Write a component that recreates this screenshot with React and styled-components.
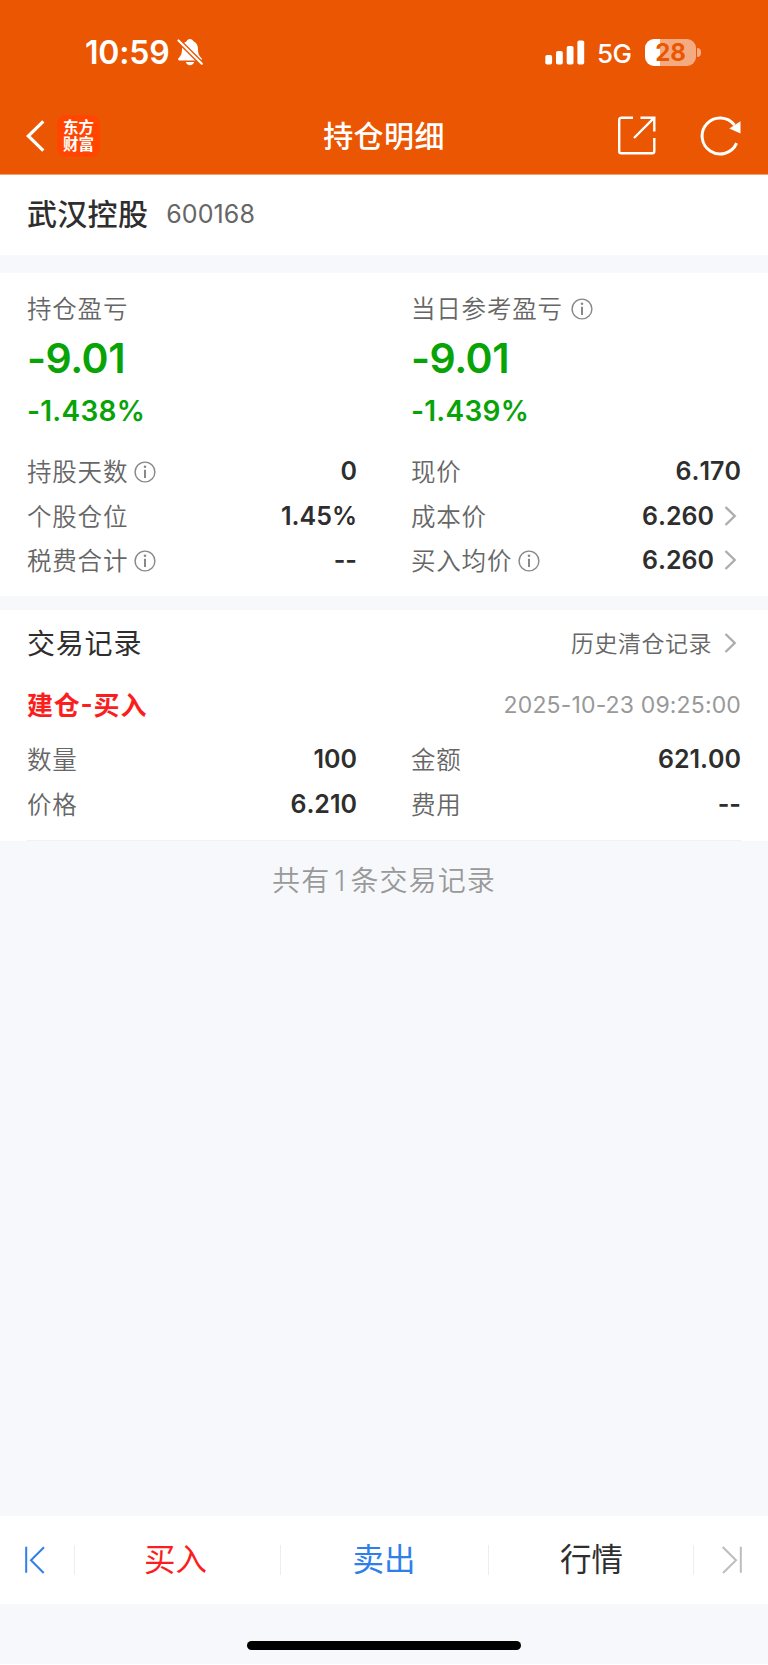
// App.jsx

import styled, { createGlobalStyle, ThemeProvider } from 'styled-components';

const theme = {
  colors: {
    brand: '#eb5602',
    page: '#f7f8fb',
    text: '#2e2e2e',
    label: '#666666',
    muted: '#999999',
    loss: '#07a307',
    buy: '#fb1e1e',
    sell: '#2f7fea',
  },
  fonts: {
    number: '"Inter", "Noto Sans CJK SC", sans-serif',
    chinese: '"Noto Sans CJK SC", "Inter", sans-serif',
  },
};

const GlobalStyle = createGlobalStyle`
  * {
    box-sizing: border-box;
  }

  body {
    margin: 0;
    background-color: #ffffff;
  }

  svg {
    display: block;
    flex: none;
  }
`;

const Screen = styled.div`
  display: flex;
  flex-direction: column;
  width: 768px;
  height: 1664px;
  overflow: hidden;
  background-color: ${({ theme }) => theme.colors.page};
  font-family: ${({ theme }) => theme.fonts.chinese};
  color: ${({ theme }) => theme.colors.text};
  white-space: nowrap;
`;

/* Header */

const Header = styled.header`
  height: 175px;
  background-color: ${({ theme }) => theme.colors.brand};
  border-bottom: 1px solid #f3a173;
  color: #ffffff;
`;

const StatusBar = styled.div`
  display: flex;
  align-items: center;
  height: 98px;
  padding: 6px 67px 0 85px;
`;

const Clock = styled.span`
  font-family: ${({ theme }) => theme.fonts.number};
  font-weight: 600;
  font-size: 32px;
  line-height: 40px;
  letter-spacing: -0.2px;
  width: 92px;
  padding-top: 2px;
`;

const StatusIcons = styled.div`
  display: flex;
  align-items: center;
  margin-left: auto;
`;

const Network = styled.span`
  font-family: ${({ theme }) => theme.fonts.number};
  font-weight: 500;
  font-size: 26px;
  line-height: 30px;
  letter-spacing: -0.6px;
  width: 48px;
  margin: 3px 0 0 12px;
`;

const Battery = styled.div`
  display: flex;
  align-items: center;
  justify-content: center;
  width: 51px;
  height: 27px;
  border-radius: 9px;
  background: linear-gradient(90deg, #ffffff 15px, #f5ab81 15px);
  font-family: ${({ theme }) => theme.fonts.number};
  font-weight: 700;
  font-size: 24px;
  line-height: 27px;
  color: ${({ theme }) => theme.colors.brand};
`;

const BatteryCap = styled.div`
  width: 4px;
  height: 9px;
  margin-left: 1px;
  border-radius: 0 4px 4px 0;
  background-color: #f5ab81;
`;

const NavBar = styled.nav`
  display: grid;
  grid-template-columns: 1fr auto 1fr;
  align-items: center;
  height: 75px;
  padding: 0 26px;
`;

const NavSide = styled.div`
  display: flex;
  align-items: center;
  justify-content: ${({ $end }) => ($end ? 'flex-end' : 'flex-start')};
  gap: ${({ $end }) => ($end ? '44px' : '12px')};
`;

const Logo = styled.div`
  width: 43px;
  height: 42px;
  padding-top: 3px;
  border-radius: 9px;
  background-color: #ff4500;
  font-weight: 700;
  font-size: 15.5px;
  line-height: 17px;
  text-align: center;
`;

const NavTitle = styled.h1`
  margin: 0;
  padding-bottom: 4px;
  font-weight: 500;
  font-size: 30px;
  line-height: 40px;
  letter-spacing: 0.4px;
`;

/* Content */

const StockRow = styled.section`
  display: flex;
  align-items: center;
  gap: 18px;
  height: 80px;
  padding: 0 27px 6px;
  background-color: #ffffff;
`;

const StockName = styled.h2`
  margin: 0;
  font-weight: 500;
  font-size: 30px;
  line-height: 40px;
  letter-spacing: 0.3px;
`;

const StockCode = styled.span`
  padding-top: 4px;
  font-family: ${({ theme }) => theme.fonts.number};
  font-size: 25px;
  line-height: 40px;
  letter-spacing: 0.1px;
  color: ${({ theme }) => theme.colors.label};
`;

const Card = styled.section`
  height: ${({ $height }) => $height}px;
  margin-top: ${({ $gap }) => $gap}px;
  background-color: #ffffff;
`;

const Columns = styled.div`
  display: grid;
  grid-template-columns: 384px 384px;
`;

const ProfitBlock = styled.div`
  padding: 17px 27px 0;
`;

const Label = styled.span`
  display: flex;
  align-items: center;
  gap: ${({ $gap }) => $gap || 6}px;
  font-size: 24.5px;
  line-height: 36px;
  letter-spacing: 0.8px;
  font-weight: 350;
  color: ${({ theme }) => theme.colors.label};

  svg {
    margin-top: 1px;
  }
`;

const Amount = styled.div`
  font-family: ${({ theme }) => theme.fonts.number};
  font-weight: 600;
  font-size: 41px;
  line-height: 50px;
  letter-spacing: -0.5px;
  margin-top: 7px;
  color: ${({ theme }) => theme.colors.loss};
`;

const Percent = styled.div`
  font-family: ${({ theme }) => theme.fonts.number};
  font-weight: 600;
  font-size: 28px;
  line-height: 36px;
  letter-spacing: 0.25px;
  margin-top: 10px;
  color: ${({ theme }) => theme.colors.loss};
`;

const Rows = styled.div`
  padding-top: ${({ $top }) => $top}px;
`;

const Row = styled.div`
  display: flex;
  align-items: center;
  justify-content: space-between;
  height: 44.6px;
  padding: 0 27px;
`;

const Value = styled.span`
  display: flex;
  align-items: center;
  gap: 10px;
  font-family: ${({ theme }) => theme.fonts.number};
  font-weight: 600;
  font-size: 25px;
  line-height: 36px;
  font-kerning: none;
`;

const SectionHeader = styled.div`
  display: flex;
  align-items: center;
  justify-content: space-between;
  height: 63px;
  padding: 0 27px;
`;

const SectionTitle = styled.h3`
  margin: 0;
  font-weight: 400;
  font-size: 28px;
  line-height: 40px;
  letter-spacing: 0.8px;
`;

const HistoryLink = styled.span`
  display: flex;
  align-items: center;
  gap: 12px;
  font-weight: 350;
  font-size: 23px;
  line-height: 36px;
  letter-spacing: 0.5px;
  color: ${({ theme }) => theme.colors.label};

  svg {
    margin-top: 2px;
  }
`;

const RecordHeader = styled.div`
  display: flex;
  align-items: center;
  justify-content: space-between;
  height: 61px;
  padding: 0 27px;
`;

const RecordType = styled.span`
  display: flex;
  font-weight: 700;
  font-size: 26px;
  line-height: 36px;
  letter-spacing: 0.8px;
  color: ${({ theme }) => theme.colors.buy};
`;

const Dash = styled.span`
  font-family: ${({ theme }) => theme.fonts.number};
`;

const RecordTime = styled.time`
  padding-top: 2px;
  font-family: ${({ theme }) => theme.fonts.number};
  font-size: 23px;
  line-height: 36px;
  letter-spacing: 0.15px;
  color: ${({ theme }) => theme.colors.muted};
`;

const Divider = styled.div`
  height: 1px;
  margin: 13.8px 27px 0;
  background-color: #f0f1f3;
`;

const RecordCount = styled.p`
  margin: 20px 0 0;
  font-family: ${({ theme }) => theme.fonts.number};
  font-weight: 350;
  font-size: 28px;
  line-height: 40px;
  letter-spacing: 1.1px;
  text-align: center;
  color: ${({ theme }) => theme.colors.muted};
`;

const Count = styled.span`
  margin: 0 4px;
`;

/* Bottom bar */

const TabBar = styled.nav`
  display: grid;
  grid-template-columns: 74px 206px 208px 205px 75px;
  align-items: center;
  height: 88px;
  margin-top: auto;
  background-color: #ffffff;
`;

const Tab = styled.div`
  display: flex;
  align-items: center;
  justify-content: center;
  height: 30px;
  padding-left: ${({ $left }) => $left || 0}px;
  padding-right: ${({ $right }) => $right || 0}px;
  border-left: ${({ $first }) => ($first ? 'none' : '1px solid #ededee')};
  font-size: 31.5px;
  line-height: 30px;
  color: ${({ $color, theme }) => theme.colors[$color || 'text']};
`;

const TabText = styled.span`
  padding-bottom: 6px;
`;

const HomeArea = styled.div`
  display: flex;
  justify-content: center;
  height: 60px;
  padding-top: 37px;
`;

const HomeIndicator = styled.div`
  width: 274px;
  height: 9px;
  border-radius: 5px;
  background-color: #000000;
`;

/* Icons */

const MutedBell = () => (
  <svg width="26" height="28" viewBox="0 0 26 28">
    <path
      d="M13 1c-1.800 0-3 1-3.400 2.300C6.500 4.600 5 7.500 5 11c0 5-1.300 7-3.400 9-.9.900-.6 2.500 1 2.500h20.800c1.600 0 1.900-1.600 1-2.500-2.100-2-3.400-4-3.400-9 0-3.500-1.500-6.400-4.600-7.700C16 2 14.800 1 13 1zM8.800 24h8.400c-.5 2-2.200 3.200-4.200 3.200S9.300 26 8.800 24z"
      fill="#fff"
    />
    <path d="M1.500 2.500l24.500 24.500" stroke="#eb5602" strokeWidth="4.800" />
    <path d="M1.500 2.500l23.300 23.300" stroke="#fff" strokeWidth="2.200" strokeLinecap="round" />
  </svg>
);

const Signal = () => (
  <svg width="40" height="25" viewBox="0 0 40 25" fill="#fff">
    <rect x="0.300" y="15" width="6.800" height="9.500" rx="1.800" />
    <rect x="11" y="11" width="6.800" height="13.500" rx="1.800" />
    <rect x="21.700" y="6" width="6.800" height="18.500" rx="1.800" />
    <rect x="32.400" y="0.500" width="6.800" height="24" rx="1.800" />
  </svg>
);

const BackIcon = () => (
  <svg width="19" height="32" viewBox="0 0 19 32" fill="none" stroke="#fff" strokeWidth="3.200">
    <path d="M17.300 1.300L2.300 16l15 14.700" />
  </svg>
);

const ShareIcon = () => (
  <svg width="38" height="39" viewBox="0 0 38 39" fill="none" stroke="#fff" strokeWidth="2.400">
    <path d="M15 1.700H3.200a2 2 0 0 0-2 2V35.200a2 2 0 0 0 2 2H34.300a2 2 0 0 0 2-2V22" />
    <path d="M22.500 1.700H36.300V15.500M36.300 1.700L16 22" />
  </svg>
);

const RefreshIcon = () => (
  <svg width="42" height="40" viewBox="0 0 42 40">
    <path d="M36.600 27.200A18 18 0 1 1 34.400 9" fill="none" stroke="#fff" strokeWidth="3" />
    <path d="M40.500 5.200V17.500L29.300 12.500z" fill="#fff" />
  </svg>
);

const InfoIcon = () => (
  <svg width="22" height="22" viewBox="0 0 22 22" fill="none" stroke="#888">
    <circle cx="11" cy="11" r="9.900" strokeWidth="1.400" />
    <path d="M11 8.800v8.200" strokeWidth="2" />
    <circle cx="11" cy="5.700" r="1.300" fill="#888" stroke="none" />
  </svg>
);

const ChevronIcon = () => (
  <svg width="17" height="20" viewBox="0 0 17 20" fill="none" stroke="#adadad" strokeWidth="2.400">
    <path d="M1.500 1L10.700 10l-9.200 9" />
  </svg>
);

const FirstIcon = () => (
  <svg width="20" height="28" viewBox="0 0 20 28" fill="none" stroke="#2f7fea" strokeWidth="2">
    <path d="M1.200 .7v26M19 1.300L6 14.300l12.700 12.700" />
  </svg>
);

const LastIcon = () => (
  <svg width="20" height="28" viewBox="0 0 20 28" fill="none" stroke="#bdbdbd" strokeWidth="2">
    <path d="M18.800 .7v26M.7 1L14 14.300l-13 12.700" />
  </svg>
);

/* Data */

const profits = [
  { label: '持仓盈亏', amount: '-9.01', percent: '-1.438%' },
  { label: '当日参考盈亏', amount: '-9.01', percent: '-1.439%', info: true },
];

const holding = [
  { label: '持股天数', value: '0', info: true },
  { label: '现价', value: '6.170' },
  { label: '个股仓位', value: '1.45%' },
  { label: '成本价', value: '6.260', link: true },
  { label: '税费合计', value: '--', info: true },
  { label: '买入均价', value: '6.260', info: true, link: true },
];

const record = [
  { label: '数量', value: '100' },
  { label: '金额', value: '621.00' },
  { label: '价格', value: '6.210' },
  { label: '费用', value: '--' },
];

const DataRows = ({ items, top }) => (
  <Rows $top={top}>
    <Columns>
      {items.map(({ label, value, info, link }) => (
        <Row key={label}>
          <Label>
            {label}
            {info && <InfoIcon />}
          </Label>
          <Value>
            {value}
            {link && <ChevronIcon />}
          </Value>
        </Row>
      ))}
    </Columns>
  </Rows>
);

const App = () => {
  return (
    <ThemeProvider theme={theme}>
      <GlobalStyle />
      <Screen>
        <Header>
          <StatusBar>
            <Clock>10:59</Clock>
            <MutedBell />
            <StatusIcons>
              <Signal />
              <Network>5G</Network>
              <Battery>28</Battery>
              <BatteryCap />
            </StatusIcons>
          </StatusBar>
          <NavBar>
            <NavSide>
              <BackIcon />
              <Logo>
                东方
                <br />
                财富
              </Logo>
            </NavSide>
            <NavTitle>持仓明细</NavTitle>
            <NavSide $end>
              <ShareIcon />
              <RefreshIcon />
            </NavSide>
          </NavBar>
        </Header>

        <StockRow>
          <StockName>武汉控股</StockName>
          <StockCode>600168</StockCode>
        </StockRow>

        <Card $height={323} $gap={18}>
          <Columns>
            {profits.map(({ label, amount, percent, info }) => (
              <ProfitBlock key={label}>
                <Label $gap={8}>
                  {label}
                  {info && <InfoIcon />}
                </Label>
                <Amount>{amount}</Amount>
                <Percent>{percent}</Percent>
              </ProfitBlock>
            ))}
          </Columns>
          <DataRows items={holding} top={20} />
        </Card>

        <Card $height={231} $gap={14}>
          <SectionHeader>
            <SectionTitle>交易记录</SectionTitle>
            <HistoryLink>
              历史清仓记录
              <ChevronIcon />
            </HistoryLink>
          </SectionHeader>
          <RecordHeader>
            <RecordType>
              建仓<Dash>-</Dash>买入
            </RecordType>
            <RecordTime>2025-10-23 09:25:00</RecordTime>
          </RecordHeader>
          <DataRows items={record} top={3} />
          <Divider />
        </Card>

        <RecordCount>
          共有<Count>1</Count>条交易记录
        </RecordCount>

        <TabBar>
          <Tab $first $right={5}>
            <FirstIcon />
          </Tab>
          <Tab $color="buy" $right={4}>
            <TabText>买入</TabText>
          </Tab>
          <Tab $color="sell" $right={1}>
            <TabText>卖出</TabText>
          </Tab>
          <Tab $left={1}>
            <TabText>行情</TabText>
          </Tab>
          <Tab $left={2}>
            <LastIcon />
          </Tab>
        </TabBar>
        <HomeArea>
          <HomeIndicator />
        </HomeArea>
      </Screen>
    </ThemeProvider>
  );
};

export default App;
